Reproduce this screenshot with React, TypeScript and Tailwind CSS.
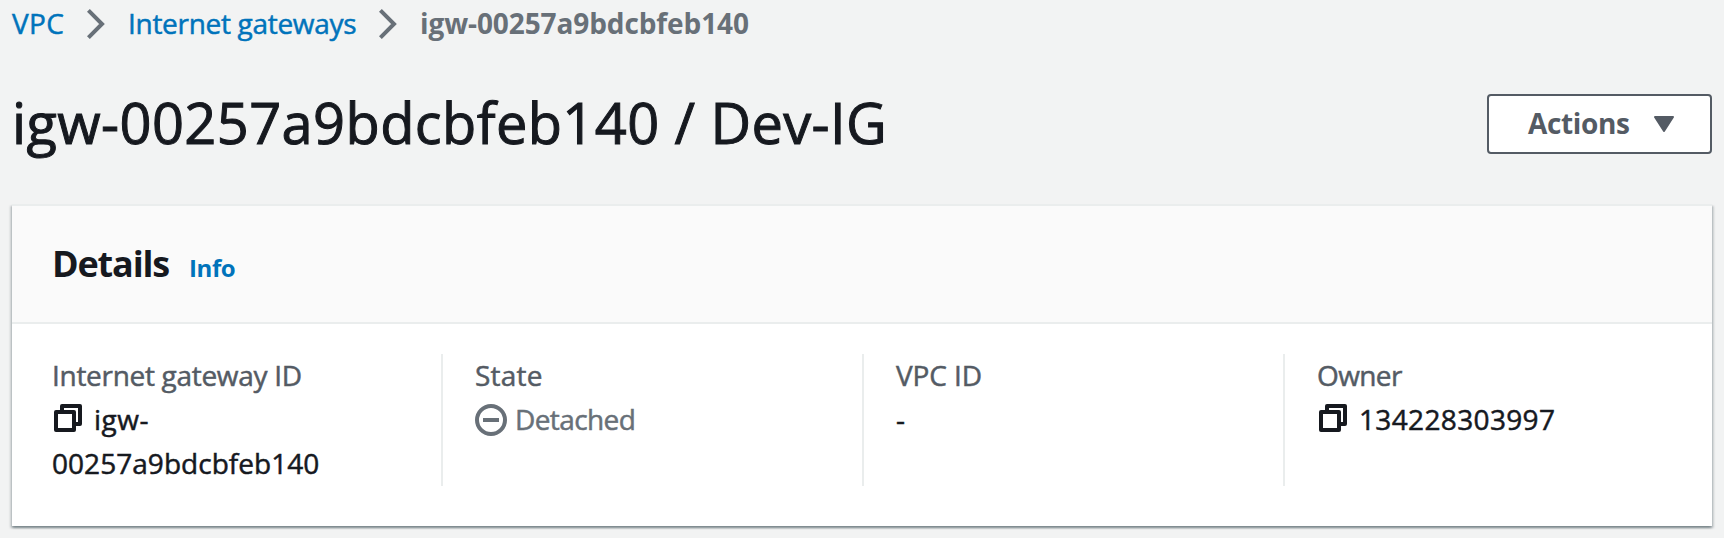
import type { ReactNode } from "react";

function Chevron() {
  return (
    <svg width="18" height="32" viewBox="0 0 18 32" className="mt-px shrink-0" fill="none" stroke="#687078" strokeWidth="4">
      <path d="M1.4 2.4 L15 16 L1.4 29.6" />
    </svg>
  );
}

function CopyIcon() {
  return (
    <svg width="28" height="28" viewBox="0 0 28 28" className="mt-[7px] ml-0.5 shrink-0" fill="none" stroke="#16191f" strokeWidth="4" strokeLinejoin="round">
      <path d="M8 8 V2 H26 V20 H20" />
      <rect x="2" y="8" width="18" height="18" />
    </svg>
  );
}

function Column({ label, first, children }: { label: ReactNode; first?: boolean; children: ReactNode }) {
  return (
    <div className={first ? "w-[421px] px-8" : "w-[421px] border-l-2 border-[#eaeded] px-8"}>
      <div className="-mt-px text-[#545b64]">{label}</div>
      {children}
    </div>
  );
}

export default function App() {
  return (
    <div className="h-[538px] overflow-hidden bg-[#f2f3f3] px-3 font-['Open_Sans','Noto_Sans',sans-serif] text-[28px] leading-[44px] whitespace-nowrap text-[#16191f] [-webkit-text-stroke:0.5px]">
      <nav className="flex h-[46px] items-center">
        <a className="w-[75px] tracking-[0.3px] text-[#0073bb]">VPC</a>
        <Chevron />
        <a className="ml-[23px] w-[251px] tracking-[-0.3px] text-[#0073bb]">Internet gateways</a>
        <Chevron />
        <span className="ml-[23px] font-bold tracking-[-0.1px] text-[#687078] [-webkit-text-stroke:0]">igw-00257a9bdcbfeb140</span>
      </nav>
      <header className="flex h-[158px] items-start justify-between pt-12">
        <h1 className="-mt-0.5 text-[56px] leading-[60px] tracking-[0.39px] [-webkit-text-stroke:1px]">igw-00257a9bdcbfeb140 / Dev-IG</h1>
        <button className="flex h-[60px] w-[225px] items-center rounded-[4px] border-2 border-[#545b64] bg-white pl-[39px] font-bold text-[#545b64] [-webkit-text-stroke:0]">
          <span className="w-[126px] pb-0.5 text-left tracking-[-0.35px]">Actions</span>
          <svg width="20" height="16" viewBox="0 0 20 16" fill="#545b64" stroke="#545b64" strokeWidth="2" strokeLinejoin="round">
            <path d="M1 1 H19 L10 15 Z" />
          </svg>
        </button>
      </header>
      <section className="h-[322px] border-t-2 border-[#eaeded] bg-white shadow-[0_2px_2px_0_rgba(0,28,36,0.3),2px_2px_2px_0_rgba(0,28,36,0.15),-2px_2px_2px_0_rgba(0,28,36,0.15)]">
        <div className="flex h-[118px] items-baseline border-b-2 border-[#eaeded] bg-[#fafafa] pt-9 pl-10 [-webkit-text-stroke:0]">
          <h2 className="w-[137px] text-[36px] font-bold tracking-[-1.15px]">Details</h2>
          <a className="text-[24px] font-bold tracking-[-0.4px] text-[#0073bb]">Info</a>
        </div>
        <div className="flex h-[162px] px-2 pt-[30px]">
          <Column first label={<span className="tracking-[-0.3px]">Internet gateway ID</span>}>
            <div className="flex">
              <CopyIcon />
              <span className="ml-3 tracking-[0.5px]">igw-</span>
            </div>
            <div className="tracking-[0.04px]">00257a9bdcbfeb140</div>
          </Column>
          <Column label={<span className="tracking-[0.2px]">State</span>}>
            <div className="flex text-[#687078]">
              <svg width="32" height="32" viewBox="0 0 32 32" className="mt-[7px] shrink-0" fill="none" stroke="#687078" strokeWidth="4">
                <circle cx="16" cy="16" r="14" />
                <path d="M8 16 H24" />
              </svg>
              <span className="ml-2 tracking-[-0.6px]">Detached</span>
            </div>
          </Column>
          <Column label={<span className="tracking-[-0.1px]">VPC ID</span>}>
            <div>-</div>
          </Column>
          <Column label={<span className="tracking-[-0.6px]">Owner</span>}>
            <div className="flex">
              <CopyIcon />
              <span className="ml-3 tracking-[0.35px]">134228303997</span>
            </div>
          </Column>
        </div>
      </section>
    </div>
  );
}
